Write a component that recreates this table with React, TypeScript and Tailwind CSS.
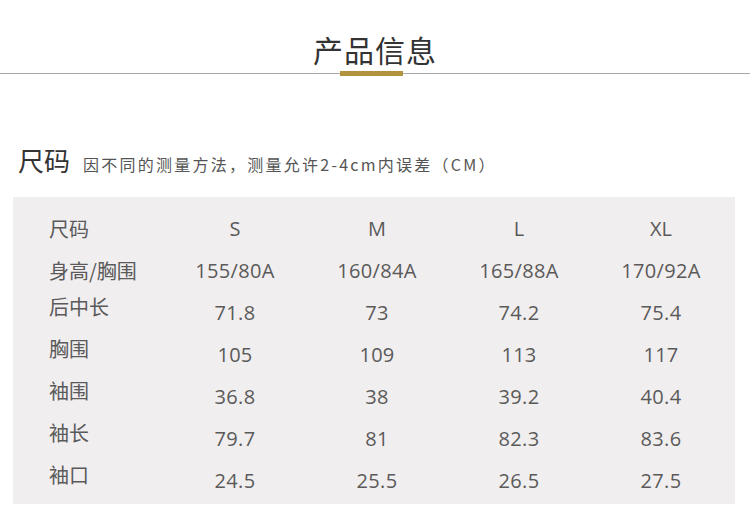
import React from "react";

const sizes = ["S", "M", "L", "XL"];

const rows: { label: string; values: string[]; lift?: boolean }[] = [
  { label: "身高/胸围", values: ["155/80A", "160/84A", "165/88A", "170/92A"] },
  { label: "后中长", values: ["71.8", "73", "74.2", "75.4"], lift: true },
  { label: "胸围", values: ["105", "109", "113", "117"], lift: true },
  { label: "袖围", values: ["36.8", "38", "39.2", "40.4"], lift: true },
  { label: "袖长", values: ["79.7", "81", "82.3", "83.6"], lift: true },
  { label: "袖口", values: ["24.5", "25.5", "26.5", "27.5"], lift: true },
];

const cjk = "font-['Noto_Sans_CJK_SC','Noto_Sans',sans-serif]";
const num = "font-['Open_Sans','Noto_Sans_CJK_SC',sans-serif]";

const App = () => {
  return (
    <div className={`w-[750px] h-[520px] bg-white ${cjk} overflow-hidden`}>
      {/* 标题 */}
      <div className="pt-[31px] mb-[4px] text-center">
        <h1 className="text-[30px] leading-[36px] text-[#333] tracking-[1px]">产品信息</h1>
      </div>
      <div className="flex items-center h-[5px]">
        <div className="w-[340px] h-px bg-[#a8a8a8]" />
        <div className="w-[63px] h-[5px] bg-[#b2923c]" />
        <div className="flex-1 h-px bg-[#a8a8a8]" />
      </div>

      {/* 尺码说明 */}
      <div className="flex items-baseline pl-[18px] mt-[68px]">
        <span className="text-[26px] leading-[32px] text-[#333]">尺码</span>
        <span className="ml-[13px] text-[16px] text-[#555] tracking-[2.25px]">
          因不同的测量方法，测量允许2-4cm内误差（CM）
        </span>
      </div>

      {/* 尺码表 */}
      <div className="mx-[13px] mt-[21px] w-[722px] bg-[#f1eeef] pt-[11px] pb-[2px] text-[#5a5a5a]">
        <div className="grid grid-cols-[151px_repeat(4,142px)] h-[42px] items-center">
          <div className="pl-[36px] text-[20px]">尺码</div>
          {sizes.map((s) => (
            <div key={s} className={`text-center text-[20px] ${num}`}>
              {s}
            </div>
          ))}
        </div>
        {rows.map((r) => (
          <div
            key={r.label}
            className="grid grid-cols-[151px_repeat(4,142px)] h-[42px] items-center"
          >
            <div className={`pl-[36px] text-[20px] leading-[28px] ${r.lift ? "mb-[12px]" : ""}`}>
              {r.label}
            </div>
            {r.values.map((v, i) => (
              <div key={i} className={`text-center text-[20px] leading-[28px] tracking-[0.3px] ${num}`}>
                {v}
              </div>
            ))}
          </div>
        ))}
      </div>
    </div>
  );
};

export default App;
